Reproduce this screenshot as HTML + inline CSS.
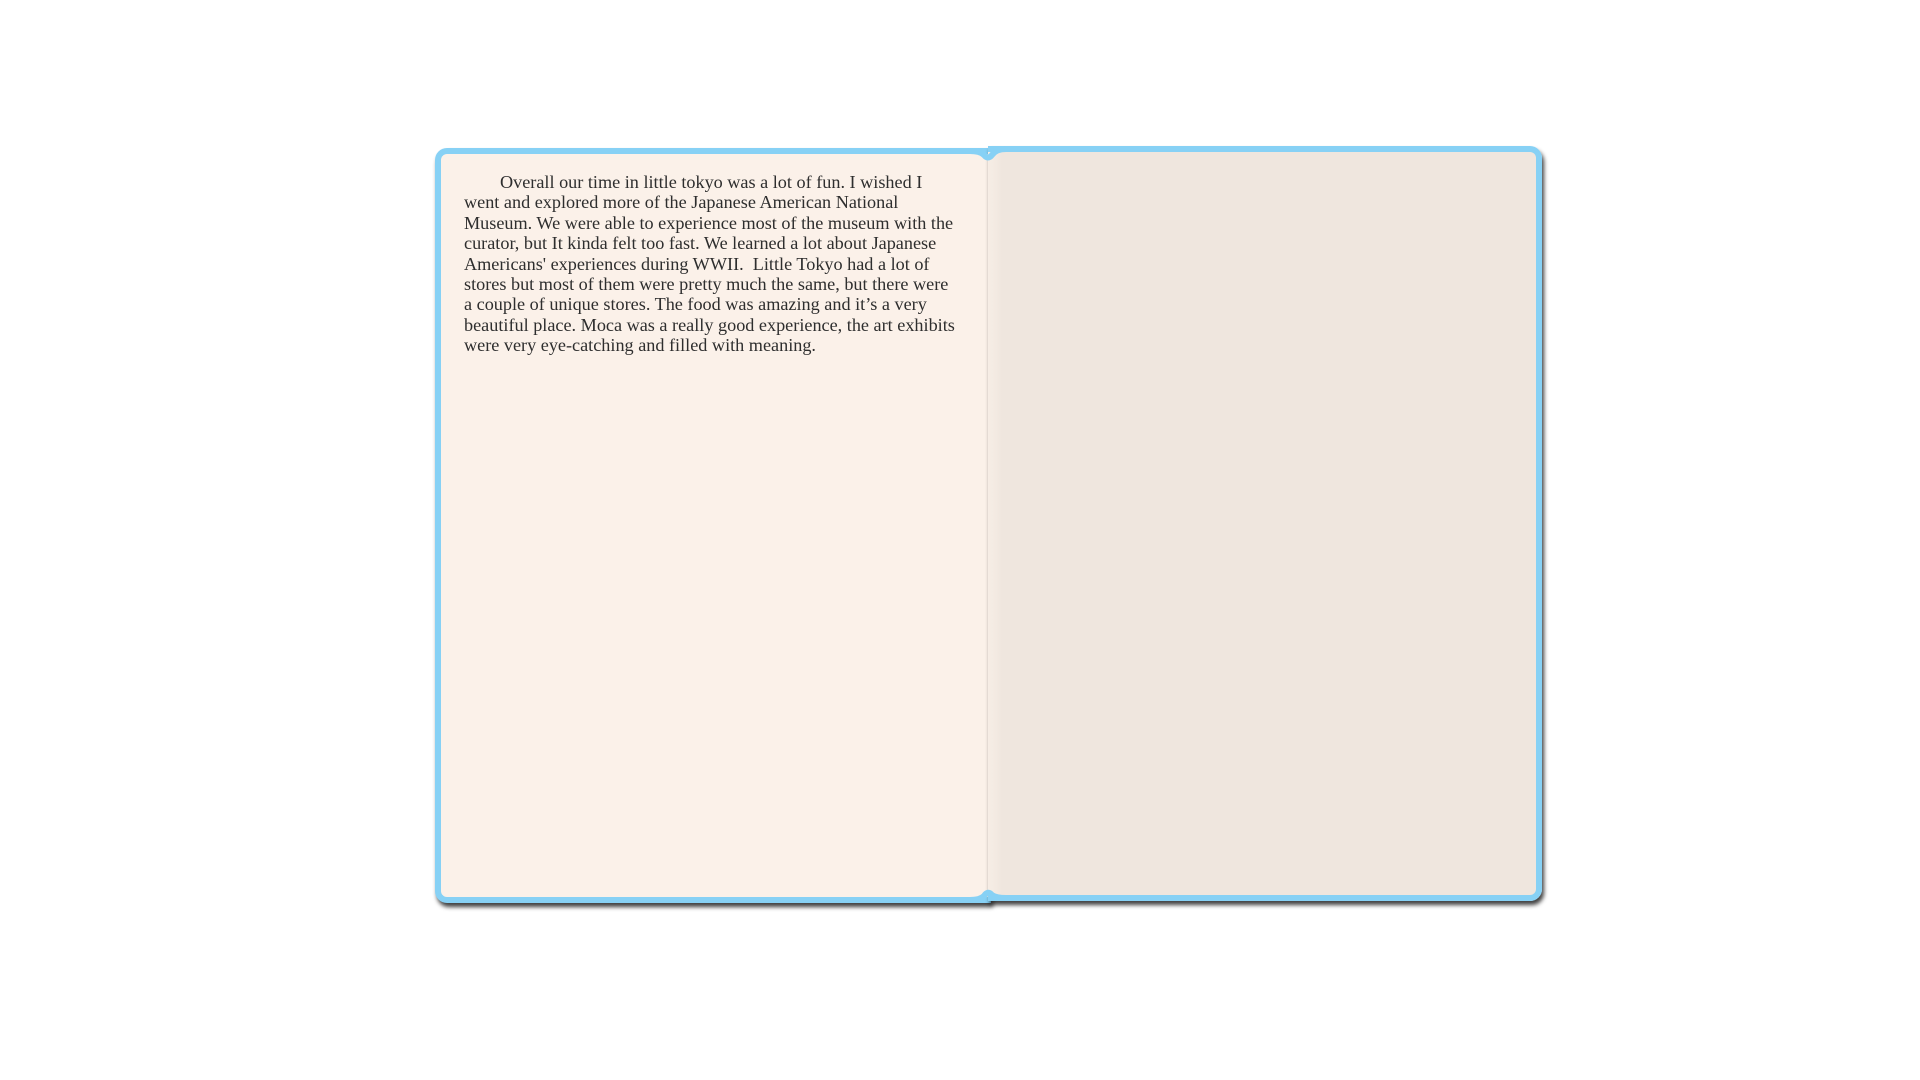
<!DOCTYPE html>
<html><head><style>
html,body{margin:0;padding:0;background:#fff;width:1920px;height:1080px;overflow:hidden}
.pg{position:absolute;box-sizing:border-box;border:6px solid #87d1f5;box-shadow:2px 4px 4px rgba(0,0,0,.75)}
#l{left:435px;top:148px;width:556px;height:755px;background:#fbf1e9;border-radius:12px 0 0 12px;border-right:none}
#r{left:988px;top:146px;width:554px;height:755px;background:linear-gradient(90deg,#f6ede5 0,#f3eae2 8px,#efe6de 14px,#efe6de 100%);border-radius:0 12px 12px 0;border-left:none;z-index:1}
.t{position:absolute;left:464px;top:172px;width:520px;font:18.2px/20.4px "Liberation Serif",serif;color:#2e2e2e;white-space:nowrap;z-index:2}
svg{position:absolute;left:0;top:0;z-index:3}
</style></head><body>
<div class="pg" id="l"></div>
<div class="pg" id="r"></div>
<svg width="1920" height="1080"><g fill="none" stroke="#87d1f5" stroke-width="6">
<path d="M970 151 Q980 151 984 155 Q988 160 992 155 Q996 149 1006 149"/>
<path d="M970 900 Q980 900 984 896 Q988 890 992 895 Q996 898 1006 898"/>
</g></svg>
<div class="t"><span style="padding-left:36px"></span>Overall our time in little tokyo was a lot of fun. I wished I<br>went and explored more of the Japanese American National<br>Museum. We were able to experience most of the museum with the<br>curator, but It kinda felt too fast. We learned a lot about Japanese<br>Americans' experiences during WWII.&nbsp; Little Tokyo had a lot of<br>stores but most of them were pretty much the same, but there were<br>a couple of unique stores. The food was amazing and it’s a very<br>beautiful place. Moca was a really good experience, the art exhibits<br>were very eye-catching and filled with meaning.</div>
</body></html>
